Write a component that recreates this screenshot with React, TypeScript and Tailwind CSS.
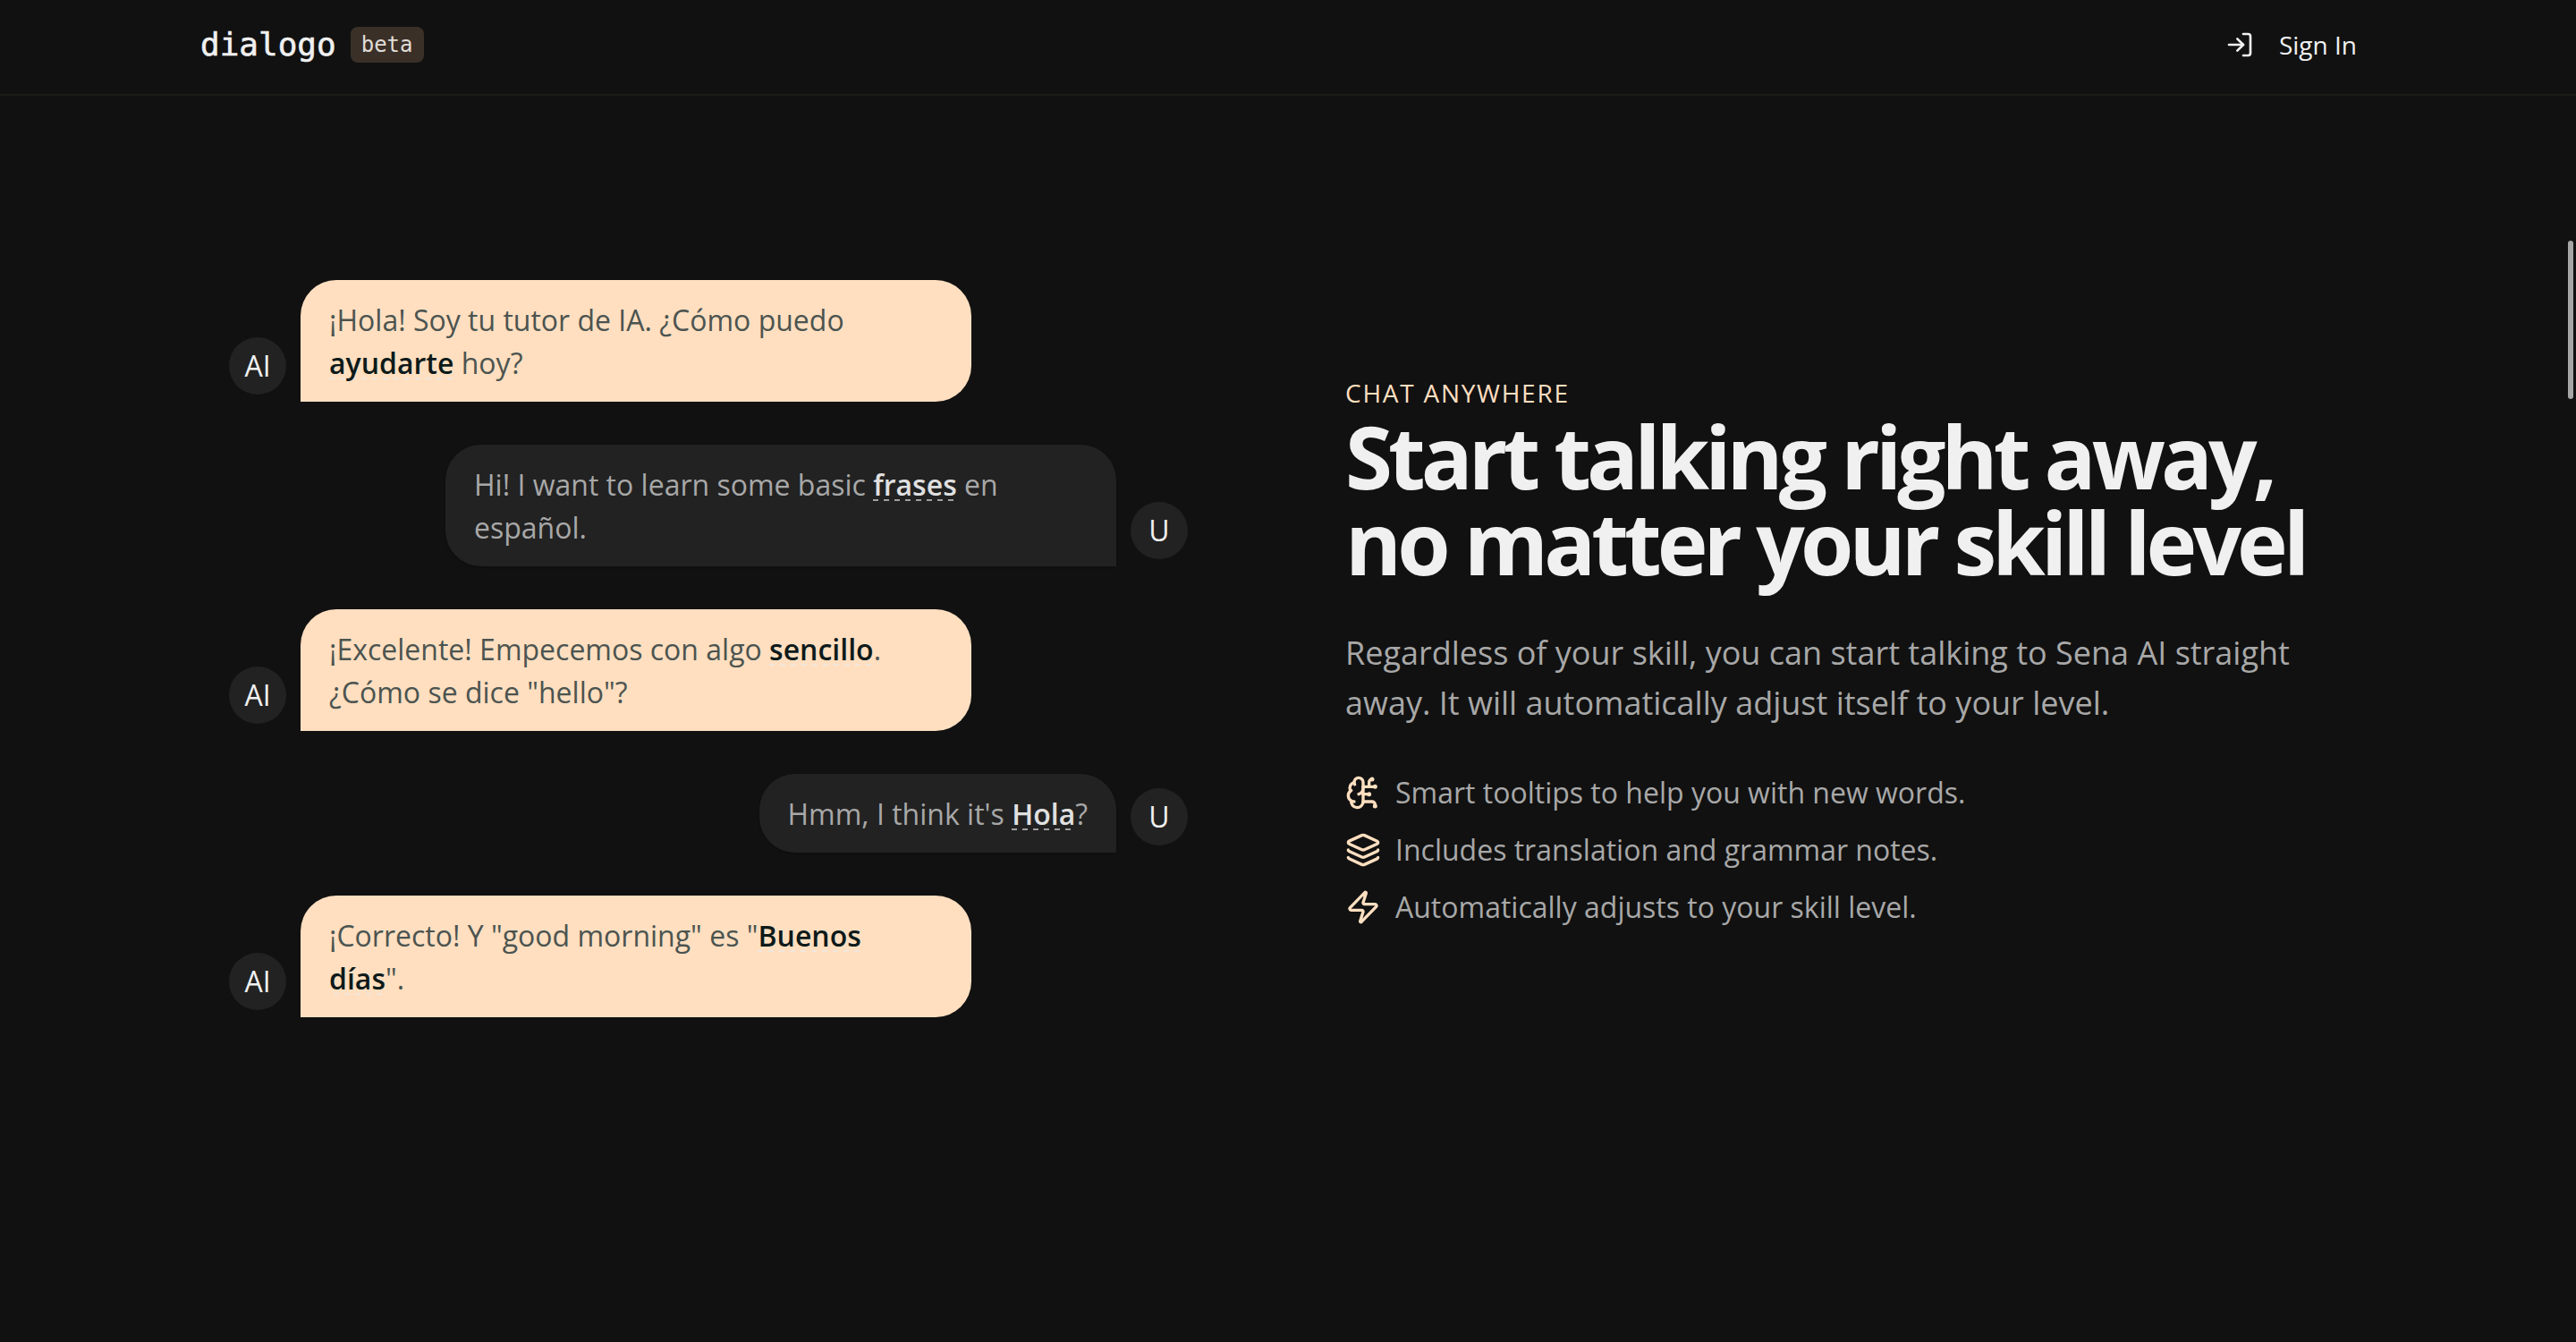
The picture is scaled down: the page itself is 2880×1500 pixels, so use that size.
import { BrainCircuit, Layers, LogIn, Zap } from "lucide-react";
import type { ReactNode } from "react";

const FONT = "font-['Open_Sans','Noto_Sans',sans-serif]";
const MONO = "font-['DejaVu_Sans_Mono',monospace]";

function Avatar({ label }: { label: string }) {
  return (
    <div className="mb-2 flex h-16 w-16 shrink-0 items-center justify-center rounded-full bg-[#222222] text-[32px] text-[#f0f0f0]">
      {label}
    </div>
  );
}

function AiMessage({ children }: { children: ReactNode }) {
  return (
    <div className="flex items-end gap-4">
      <Avatar label="AI" />
      <div className="w-[750px] rounded-[40px] rounded-bl-none bg-[#ffdfc0] px-8 pt-[21px] pb-[19px] text-[32px] leading-[48px] text-[#4c5450]">
        {children}
      </div>
    </div>
  );
}

function UserMessage({ children }: { children: ReactNode }) {
  return (
    <div className="flex items-end justify-end gap-4">
      <div className="max-w-[750px] rounded-[40px] rounded-br-none bg-[#222222] px-8 pt-[21px] pb-[19px] text-[32px] leading-[48px] text-[#a8a8a8] shadow-sm">
        {children}
      </div>
      <Avatar label="U" />
    </div>
  );
}

function AiWord({ children }: { children: ReactNode }) {
  return (
    <span className="bg-[repeating-linear-gradient(90deg,#f0e6dc_0_6px,transparent_6px_12px)] bg-[length:100%_2px] bg-[position:0_38px] bg-no-repeat font-semibold text-[#0d1a1a]">
      {children}
    </span>
  );
}

function UserWord({ children }: { children: ReactNode }) {
  return (
    <span className="bg-[repeating-linear-gradient(90deg,#a0a0a0_0_6px,transparent_6px_12px)] bg-[length:100%_2px] bg-[position:0_38px] bg-no-repeat font-semibold text-[#e0e0e0]">
      {children}
    </span>
  );
}

const features = [
  { icon: BrainCircuit, text: "Smart tooltips to help you with new words." },
  { icon: Layers, text: "Includes translation and grammar notes." },
  { icon: Zap, text: "Automatically adjusts to your skill level." },
];

export default function App() {
  return (
    <div className={`relative h-[1500px] overflow-hidden bg-[#111111] ${FONT}`}>
      <header className="flex h-[107px] items-center justify-between border-b-2 border-[#1c1d18] px-[224px] pb-[6px]">
        <div className="flex items-center gap-4">
          <span className={`text-[36px] text-[#f0f0f0] [-webkit-text-stroke:0.6px_#f0f0f0] ${MONO}`}>dialogo</span>
          <span className={`rounded-lg bg-[#3a3028] px-3 py-[3px] text-[24px] leading-[34px] text-[#e0dcd6] ${MONO}`}>
            beta
          </span>
        </div>
        <button type="button" className="mr-[21px] flex items-center gap-7 text-[28px] text-[#f0f0f0]">
          <LogIn size={32} strokeWidth={2} />
          Sign In
        </button>
      </header>

      <main className="grid grid-cols-[1072px_1104px] items-center gap-x-[176px] pt-[206px] pl-[256px]">
        <div className="flex flex-col gap-12">
          <AiMessage>
            ¡Hola! Soy tu tutor de IA. ¿Cómo puedo <AiWord>ayudarte</AiWord> hoy?
          </AiMessage>
          <UserMessage>
            Hi! I want to learn some basic <UserWord>frases</UserWord> en español.
          </UserMessage>
          <AiMessage>
            ¡Excelente! Empecemos con algo <AiWord>sencillo</AiWord>. ¿Cómo se dice "hello"?
          </AiMessage>
          <UserMessage>
            Hmm, I think it's <UserWord>Hola</UserWord>?
          </UserMessage>
          <AiMessage>
            ¡Correcto! Y "good morning" es "<AiWord>Buenos días</AiWord>".
          </AiMessage>
        </div>

        <section className="pt-3">
          <p className="text-[28px] leading-[46px] font-medium tracking-[1.75px] text-[#ffdfc0]">CHAT ANYWHERE</p>
          <h1 className="mb-12 text-[96px] leading-[96px] font-bold tracking-[-4.9px] text-[#f0f0f0]">
            Start talking right away, no matter your skill level
          </h1>
          <p className="text-[36px] leading-[56px] text-[#a8a8a8]">
            Regardless of your skill, you can start talking to Sena AI straight away. It will automatically adjust
            itself to your level.
          </p>
          <ul className="mt-10 flex flex-col">
            {features.map(({ icon: Icon, text }) => (
              <li key={text} className="flex h-16 items-center gap-4 text-[32px] text-[#a8a8a8]">
                <Icon size={40} strokeWidth={2} className="shrink-0 text-[#ffdfc0]" />
                {text}
              </li>
            ))}
          </ul>
        </section>
      </main>

      <div className="absolute top-[269px] right-[3px] h-[177px] w-[6px] rounded-full bg-[#a6a6a6]" />
    </div>
  );
}
